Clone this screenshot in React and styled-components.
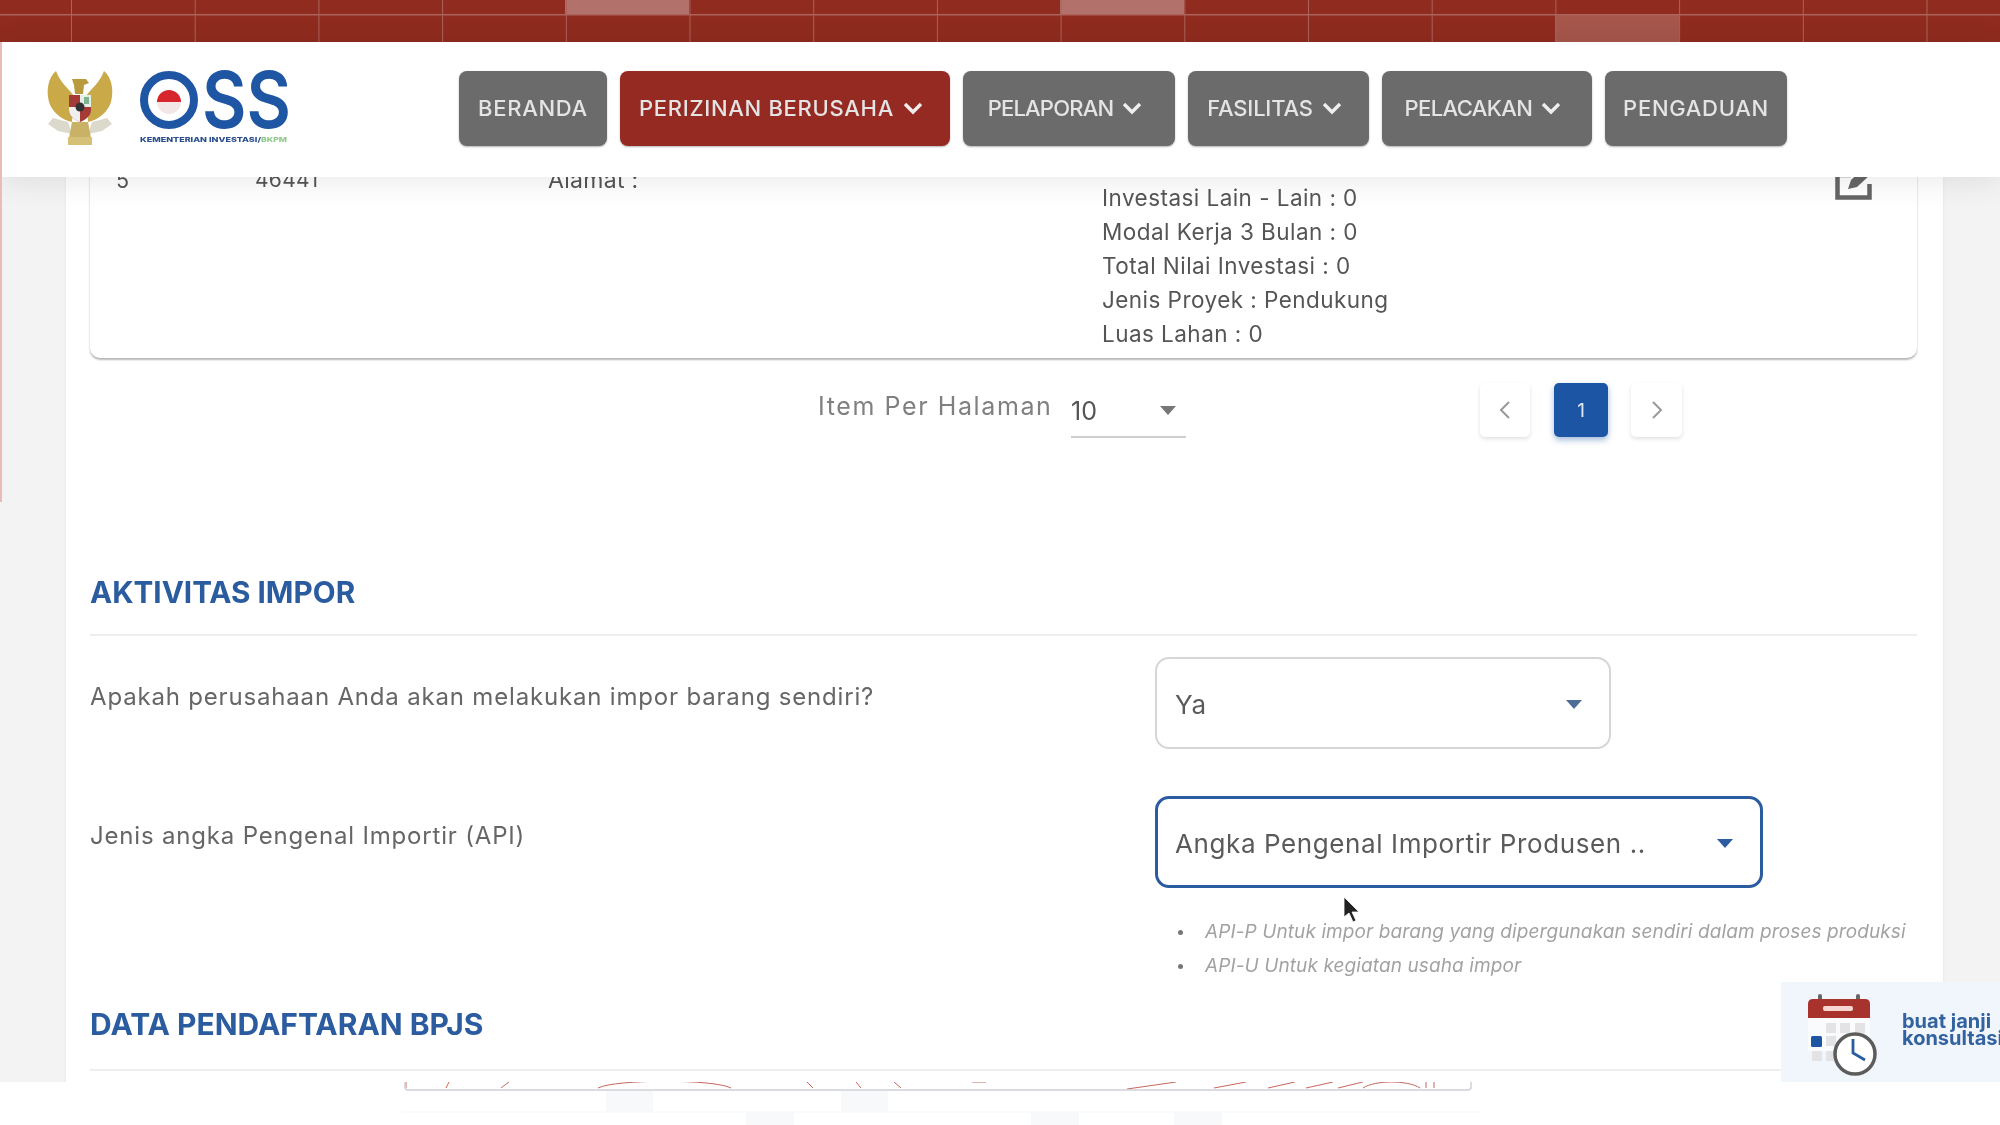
import React from 'react';
import styled, { createGlobalStyle } from 'styled-components';

const Global = createGlobalStyle`
  html, body { margin: 0; padding: 0; background: #fff; }
  body { font-family: Inter, "Open Sans", sans-serif; color: #555; }
  #root { width: 2000px; height: 1125px; overflow: hidden; filter: blur(0.55px); }
  * { box-sizing: border-box; }
`;

const Page = styled.div`
  position: relative;
  width: 2000px;
  height: 1125px;
  display: flex;
  flex-direction: column;
  overflow: hidden;
  background: #fff;
  &::before {
    content: '';
    position: absolute;
    z-index: 5;
    left: 0;
    top: 42px;
    width: 1.5px;
    height: 460px;
    background: #e8bcb8;
  }
`;

const TopBand = styled.svg`
  display: block;
  flex: none;
  width: 2000px;
  height: 42px;
`;

const Header = styled.header`
  position: relative;
  z-index: 2;
  flex: none;
  height: 135px;
  background: #fff;
  display: flex;
  align-items: center;
  padding: 0 0 3px 44px;
  box-shadow: 0 4px 30px rgba(0, 0, 0, 0.09);
`;

const LogoMark = styled.svg`
  flex: none;
  width: 250px;
  height: 112px;
  display: block;
`;

const Nav = styled.nav`
  display: flex;
  gap: 13px;
  margin-left: 165px;
`;

const NavButton = styled.button`
  width: ${p => p.$w}px;
  height: 75px;
  border: 0;
  border-radius: 8px;
  background: ${p => (p.$active ? '#952a22' : '#6b6b6b')};
  color: #e4e4e4;
  font: 500 22px/1 Inter, sans-serif;
  letter-spacing: ${p => p.$ls}px;
  display: flex;
  align-items: center;
  justify-content: center;
  gap: 9px;
  padding: 0 ${p => (p.$menu ? 8 : 0)}px 0 0;
  box-shadow: 0 1px 2px rgba(0, 0, 0, 0.3);
  white-space: nowrap;
`;

const Main = styled.main`
  flex: none;
  height: 905px;
  background: #f3f3f3;
  padding: 0 57px 0 66px;
  overflow: hidden;
`;

const Sheet = styled.div`
  background: #fff;
  height: 1000px;
  margin-top: -14px;
  padding: 0 26px 0 24px;
  box-shadow: 0 0 4px rgba(0, 0, 0, 0.05);
`;

const Card = styled.section`
  height: 195px;
  border-radius: 0 0 10px 10px;
  background: #fff;
  box-shadow: 0 2px 2px rgba(0, 0, 0, 0.28), 0 0 2px rgba(0, 0, 0, 0.06);
  display: grid;
  grid-template-columns: 139px 293px 554px 1fr 82px;
  padding-left: 26px;
`;

const Cell = styled.div`
  font-size: ${p => p.$size || 21.5}px;
  line-height: 34px;
  letter-spacing: 0.3px;
  color: #555;
`;

const Details = styled.div`
  padding-top: 18px;
  font-size: 22.5px;
  line-height: 34px;
  letter-spacing: 0.45px;
  color: #555;
`;

const DetailLine = styled.div`
  white-space: nowrap;
`;

const EditIcon = styled.svg`
  width: 38px;
  height: 34px;
  margin-top: 3px;
  display: block;
`;

const Pager = styled.div`
  height: 110px;
  display: grid;
  grid-template-columns: 728px 253px 115px 294px 50px 24px 54px 23px 51px;
  align-items: start;
  padding-top: 25px;
`;

const PerPageLabel = styled.div`
  grid-column: 2;
  font-size: 25px;
  line-height: 46px;
  color: #808080;
  letter-spacing: 1.6px;
  white-space: nowrap;
`;

const PerPageSelect = styled.div`
  grid-column: 3;
  height: 55px;
  border-bottom: 2px solid #cfcfcf;
  display: flex;
  align-items: center;
  justify-content: space-between;
  padding: 2px 10px 0 0;
  font-size: 25px;
  color: #555;
`;

const Caret = styled.span`
  width: 0;
  height: 0;
  border-left: 8px solid transparent;
  border-right: 8px solid transparent;
  border-top: 9px solid ${p => p.$color || '#777'};
`;

const PageBox = styled.div`
  grid-column: ${p => p.$col};
  height: 54px;
  border-radius: 5px;
  display: flex;
  align-items: center;
  justify-content: center;
  font-size: 19px;
  background: ${p => (p.$active ? '#1c55a3' : '#fff')};
  color: ${p => (p.$active ? '#dfe8f5' : '#999')};
  box-shadow: ${p => (p.$active ? '0 3px 6px rgba(28, 85, 163, 0.4)' : '0 2px 4px rgba(0, 0, 0, 0.12)')};
`;

const SectionTitle = styled.h2`
  margin: 0;
  font: 700 29.7px/40px Inter, sans-serif;
  color: #2a5c9f;
  white-space: nowrap;
`;

const ImportSection = styled.section`
  padding-top: 104px;
`;

const Rule = styled.div`
  height: 2px;
  background: #eeeeee;
  margin-top: ${p => p.$top}px;
`;

const FormRow = styled.div`
  display: grid;
  grid-template-columns: 1065px 1fr;
  margin-top: ${p => p.$top}px;
`;

const FieldLabel = styled.label`
  font-size: 24px;
  line-height: 30px;
  letter-spacing: 0.82px;
  padding-top: 25px;
  color: #666;
  white-space: nowrap;
`;

const FieldBox = styled.div`
  width: ${p => p.$w}px;
  height: 92px;
  border-radius: 14px;
  border: ${p => (p.$focus ? '3px solid #2a5c9f' : '2px solid #d6d6d6')};
  display: flex;
  align-items: center;
  justify-content: space-between;
  padding: 2px 27px 0 ${p => (p.$focus ? 17 : 18)}px;
  font-size: 26px;
  letter-spacing: 0.6px;
  color: #5a5a5a;
  white-space: nowrap;
`;

const HintList = styled.ul`
  margin: 27px 0 0;
  padding: 0 0 0 23px;
  list-style: none;
  font-size: 19px;
  line-height: 34px;
  letter-spacing: 0.1px;
  font-style: italic;
  color: #a2a2a2;
  white-space: nowrap;
`;

const HintItem = styled.li`
  display: flex;
  align-items: center;
  gap: 22px;
  &::before {
    content: '';
    width: 5px;
    height: 5px;
    border-radius: 50%;
    background: #777;
  }
`;

const BpjsTitle = styled(SectionTitle)`
  margin-top: 21px;
  font-size: 30px;
`;

const Footer = styled.footer`
  flex: none;
  height: 43px;
  background: #fff;
  display: flex;
  justify-content: center;
`;

const FooterArt = styled.svg`
  display: block;
  width: 1078px;
  height: 43px;
  margin-left: -118px;
`;

const ConsultWidget = styled.aside`
  position: absolute;
  z-index: 3;
  left: 1781px;
  top: 982px;
  width: 219px;
  height: 100px;
  background: #f1f6fc;
  display: flex;
  align-items: center;
  padding-left: 27px;
  gap: 22px;
  overflow: hidden;
`;

const ConsultIcon = styled.svg`
  flex: none;
  width: 72px;
  height: 90px;
  display: block;
`;

const ConsultText = styled.div`
  font: 700 20px/17px Inter, sans-serif;
  color: #32629f;
  white-space: nowrap;
  margin-top: -5px;
`;

const Cursor = styled.svg`
  position: absolute;
  z-index: 4;
  left: 1343px;
  top: 896px;
  width: 18px;
  height: 28px;
`;

function band() {
  const lines = [];
  for (let i = 0; i < 16; i++) lines.push(71 + i * 123.7);
  return lines;
}

const navItems = [
  { t: 'BERANDA', w: 148, ls: 0.7 },
  { t: 'PERIZINAN BERUSAHA', w: 330, c: true, a: true, ls: 0.7 },
  { t: 'PELAPORAN', w: 212, c: true, ls: -0.8 },
  { t: 'FASILITAS', w: 181, c: true, ls: -0.2 },
  { t: 'PELACAKAN', w: 210, c: true, ls: -0.6 },
  { t: 'PENGADUAN', w: 182, ls: 0.7 },
];

function Chevron() {
  return (
    <svg width="20" height="14" viewBox="0 0 20 14" fill="none">
      <path d="M2 3l8 8 8-8" stroke="#eee" strokeWidth="3.4" />
    </svg>
  );
}

function Wing() {
  return <path d="M30 24C24 16 16 10 12-1 4 6 2 18 5 30c3 10 13 18 23 20z" fill="#c9a948" />;
}

function Logo() {
  return (
    <LogoMark viewBox="0 -20 250 112">
      {/* Garuda */}
      <Wing />
      <g transform="translate(72 0) scale(-1 1)">
        <Wing />
      </g>
      <path d="M28 7h14l3 4-5 2-1 9H31l-1-9z" fill="#b99a3f" />
      <path d="M25 23h22v15c0 6-6 10-11 12-5-2-11-6-11-12z" fill="#a53b36" />
      <path d="M36 23h11v12H36z" fill="#e6efe6" />
      <path d="M40 25h5v7h-5z" fill="#7fb38f" />
      <path d="M25 35h11v15c-5-2-11-6-11-12z" fill="#efefef" />
      <circle cx="36" cy="35" r="4.500" fill="#333" />
      <path d="M24 50L9 46 4 52l10 7 14 3zM48 50l15-4 5 6-10 7-14 3z" fill="#dbd8cc" />
      <path d="M28 50h16l3 16H25z" fill="#c9b266" />
      <rect x="24" y="65" width="24" height="8" fill="#d5c078" />
      {/* OSS */}
      <circle cx="125" cy="28" r="25" fill="none" stroke="#1f56a3" strokeWidth="8" />
      <path d="M115 30a12 12 0 0 1 24 0z" fill="#d6252c" transform="translate(-2 0)" />
      <path d="M115 30a12 12 0 0 0 24 0z" fill="#f2e6e6" transform="translate(-2 0)" />
      <text x="158" y="56" fontFamily="Inter, sans-serif" fontWeight="600" fontSize="78" fill="#1f56a3" textLength="89" lengthAdjust="spacingAndGlyphs">SS</text>
      <text x="96" y="70" fontFamily="Inter, sans-serif" fontWeight="800" fontSize="6.5" fill="#2a4f8c" textLength="121" lengthAdjust="spacingAndGlyphs">KEMENTERIAN INVESTASI/</text>
      <text x="217" y="70" fontFamily="Inter, sans-serif" fontWeight="800" fontSize="6.5" fill="#8fc98a" textLength="26" lengthAdjust="spacingAndGlyphs">BKPM</text>
    </LogoMark>
  );
}

export default function App() {
  return (
    <Page>
      <Global />
      <TopBand viewBox="0 0 2000 42">
        <rect width="2000" height="42" fill="#8f2b1f" />
        <rect x="565" y="0" width="124" height="14" fill="#b2716b" />
        <rect x="1060" y="0" width="124" height="14" fill="#b2716b" />
        <rect x="1555" y="15" width="124" height="27" fill="#a6564b" />
        <rect y="14" width="2000" height="1.500" fill="#ab635b" />
        {band().map(x => (
          <rect key={x} x={x} y="0" width="1" height="42" fill="#ab635b" />
        ))}
      </TopBand>

      <Header>
        <Logo />
        <Nav>
          {navItems.map(n => (
            <NavButton key={n.t} $w={n.w} $active={n.a} $ls={n.ls} $menu={n.c}>
              {n.t}
              {n.c && <Chevron />}
            </NavButton>
          ))}
        </Nav>
      </Header>

      <Main>
        <Sheet>
          <Card>
            <Cell>5</Cell>
            <Cell $size={21}>46441</Cell>
            <Cell $size={23}>Alamat :</Cell>
            <Details>
              <DetailLine>Investasi Lain - Lain : 0</DetailLine>
              <DetailLine>Modal Kerja 3 Bulan : 0</DetailLine>
              <DetailLine>Total Nilai Investasi : 0</DetailLine>
              <DetailLine>Jenis Proyek : Pendukung</DetailLine>
              <DetailLine>Luas Lahan : 0</DetailLine>
            </Details>
            <EditIcon viewBox="0 0 38 34" fill="none">
              <path d="M16 9H2.500v22.500h32V18" stroke="#666" strokeWidth="4.500" />
              <path d="M13 23l3-9L30 1l7 0-1 7-14 13z" fill="#666" />
            </EditIcon>
          </Card>

          <Pager>
            <PerPageLabel>Item Per Halaman</PerPageLabel>
            <PerPageSelect>
              10
              <Caret />
            </PerPageSelect>
            <PageBox $col={5}>
              <svg width="14" height="22" viewBox="0 0 14 22" fill="none">
                <path d="M11 3L3 11l8 8" stroke="#999" strokeWidth="2" />
              </svg>
            </PageBox>
            <PageBox $col={7} $active>1</PageBox>
            <PageBox $col={9}>
              <svg width="14" height="22" viewBox="0 0 14 22" fill="none">
                <path d="M3 3l8 8-8 8" stroke="#999" strokeWidth="2" />
              </svg>
            </PageBox>
          </Pager>

          <ImportSection>
            <SectionTitle>AKTIVITAS IMPOR</SectionTitle>
            <Rule $top={22} />
            <FormRow $top={21}>
              <FieldLabel>Apakah perusahaan Anda akan melakukan impor barang sendiri?</FieldLabel>
              <FieldBox $w={456}>
                Ya
                <Caret $color="#4f6d96" />
              </FieldBox>
            </FormRow>
            <FormRow $top={47}>
              <FieldLabel>Jenis angka Pengenal Importir (API)</FieldLabel>
              <div>
                <FieldBox $w={608} $focus>
                  Angka Pengenal Importir Produsen ..
                  <Caret $color="#2a5c9f" />
                </FieldBox>
                <HintList>
                  <HintItem>API-P Untuk impor barang yang dipergunakan sendiri dalam proses produksi</HintItem>
                  <HintItem>API-U Untuk kegiatan usaha impor</HintItem>
                </HintList>
              </div>
            </FormRow>
            <BpjsTitle>DATA PENDAFTARAN BPJS</BpjsTitle>
            <Rule $top={25} />
          </ImportSection>
        </Sheet>
      </Main>

      <Footer>
        <FooterArt viewBox="0 0 1078 43" fill="none">
          <g fill="#f7f9fa">
            <rect x="204" y="9" width="47" height="21" />
            <rect x="439" y="9" width="47" height="21" />
            <rect x="344" y="30" width="48" height="13" />
            <rect x="629" y="30" width="48" height="13" />
            <rect x="772" y="30" width="48" height="13" />
          </g>
          <path d="M0 30H1078" stroke="#f6f7f9" />
          <g stroke="#c0564c" strokeWidth="0.9">
            <path d="M4 0v6M47 0l-3 6M107 0l-8 6" />
            <path d="M196 6C214-3 312-3 329 6" />
            <path d="M405 0l6 6M454 0l5 6M492 0l7 6" />
            <path d="M570 0h14" />
            <path d="M774 0l-49 7M844 0l-32 6M893 0l-27 6M931 0l-27 6M961 0l-25 6" />
            <path d="M961 6c12-8 45-8 57 0M1024 0v6M1032 0v6" />
          </g>
          <path d="M3 0v5q0 3 3 3H1066q3 0 3-3V0" stroke="#cfd0d9" strokeWidth="1.500" />
        </FooterArt>
      </Footer>

      <ConsultWidget>
        <ConsultIcon viewBox="0 0 72 90">
          <rect x="0" y="28" width="62" height="36" fill="#fafbfd" />
          <rect x="10" y="7" width="4" height="10" rx="2" fill="#666" />
          <rect x="48" y="7" width="4" height="10" rx="2" fill="#666" />
          <path d="M0 31V17q0-5 5-5h52q5 0 5 5v14z" fill="#a8322c" />
          <rect x="15" y="19" width="30" height="5" rx="2" fill="#f7d6d2" />
          <g fill="#e3e3e6">
            <rect x="18" y="36" width="10" height="10" />
            <rect x="32" y="36" width="10" height="10" />
            <rect x="47" y="36" width="10" height="10" />
            <rect x="18" y="49" width="10" height="10" />
            <rect x="4" y="64" width="10" height="10" />
            <rect x="18" y="64" width="10" height="10" />
          </g>
          <rect x="3" y="49" width="11" height="11" rx="1.500" fill="#1f56a3" />
          <circle cx="47" cy="67" r="20" fill="#fff" stroke="#5c5c5c" strokeWidth="3.500" />
          <path d="M45 52v14l12 7" stroke="#2a5c9f" strokeWidth="2.800" fill="none" />
        </ConsultIcon>
        <ConsultText>
          buat janji
          <br />
          konsultasi
        </ConsultText>
      </ConsultWidget>

      <Cursor viewBox="0 0 18 28">
        <path d="M1 1v20l5-4 4 9 3-1.500-4-8.500h7z" fill="#222" stroke="#fff" strokeWidth="0.8" />
      </Cursor>
    </Page>
  );
}
